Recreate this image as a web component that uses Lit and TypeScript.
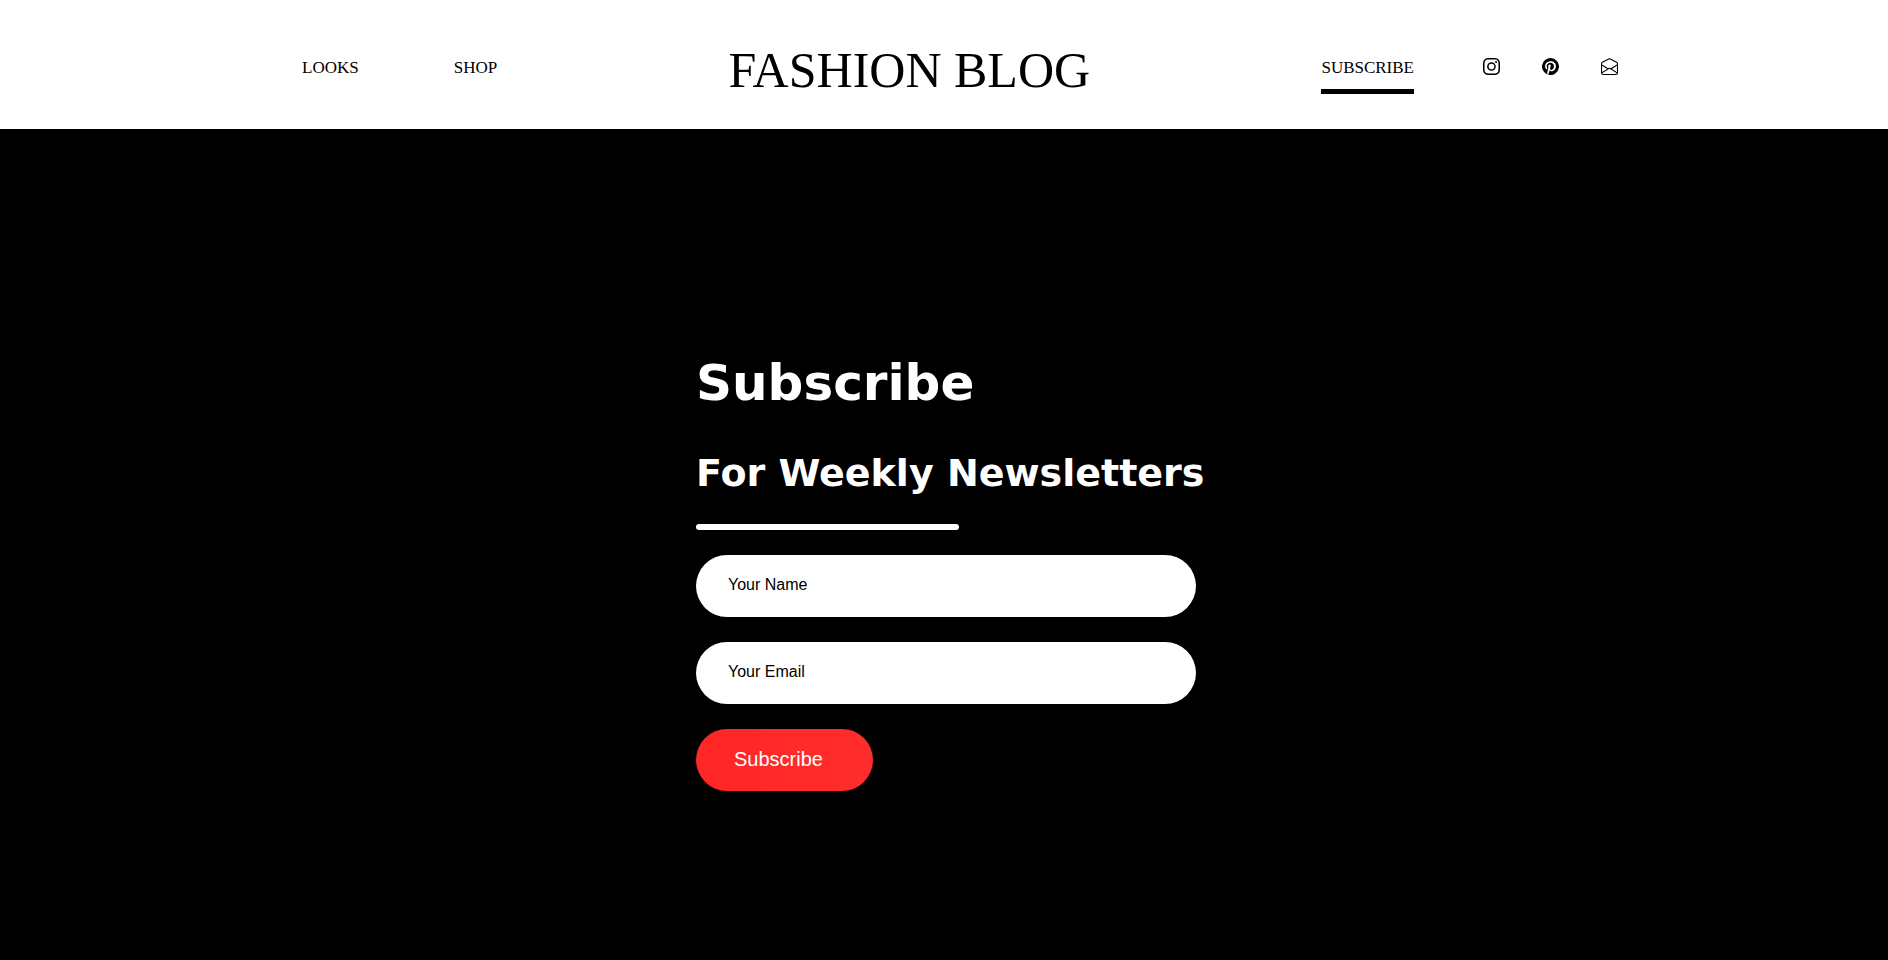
import { LitElement, html, css, svg } from "lit";
import { customElement } from "lit/decorators.js";

const instagram = svg`<path d="M8 0C5.829 0 5.556.01 4.703.048 3.85.088 3.269.222 2.76.42a3.9 3.9 0 0 0-1.417.923A3.9 3.9 0 0 0 .42 2.76C.222 3.268.087 3.85.048 4.7.01 5.555 0 5.827 0 8.001c0 2.172.01 2.444.048 3.297.04.852.174 1.433.372 1.942.205.526.478.972.923 1.417.444.445.89.719 1.416.923.51.198 1.09.333 1.942.372C5.555 15.99 5.827 16 8 16s2.444-.01 3.298-.048c.851-.04 1.434-.174 1.943-.372a3.9 3.9 0 0 0 1.416-.923c.445-.445.718-.891.923-1.417.197-.509.332-1.09.372-1.942C15.99 10.445 16 10.173 16 8s-.01-2.445-.048-3.299c-.04-.851-.175-1.433-.372-1.941a3.9 3.9 0 0 0-.923-1.417A3.9 3.9 0 0 0 13.24.42c-.51-.198-1.092-.333-1.943-.372C10.443.01 10.172 0 7.998 0zm-.717 1.442h.718c2.136 0 2.389.007 3.232.046.78.035 1.204.166 1.486.275.373.145.64.319.92.599s.453.546.598.92c.11.281.24.705.275 1.485.039.843.047 1.096.047 3.231s-.008 2.389-.047 3.232c-.035.78-.166 1.203-.275 1.485a2.5 2.5 0 0 1-.599.919c-.28.28-.546.453-.92.598-.28.11-.704.24-1.485.276-.843.038-1.096.047-3.232.047s-2.39-.009-3.233-.047c-.78-.036-1.203-.166-1.485-.276a2.5 2.5 0 0 1-.92-.598 2.5 2.5 0 0 1-.6-.92c-.109-.281-.24-.705-.275-1.485-.038-.843-.046-1.096-.046-3.233s.008-2.388.046-3.231c.036-.78.166-1.204.276-1.486.145-.373.319-.64.599-.92s.546-.453.92-.598c.282-.11.705-.24 1.485-.276.738-.034 1.024-.044 2.515-.045zm4.988 1.328a.96.96 0 1 0 0 1.92.96.96 0 0 0 0-1.92m-4.27 1.122a4.109 4.109 0 1 0 0 8.217 4.109 4.109 0 0 0 0-8.217m0 1.441a2.667 2.667 0 1 1 0 5.334 2.667 2.667 0 0 1 0-5.334"/>`;

const pinterest = svg`<path d="M8 0a8 8 0 0 0-2.915 15.452c-.07-.633-.134-1.606.027-2.297.146-.625.938-3.977.938-3.977s-.239-.479-.239-1.187c0-1.113.645-1.943 1.448-1.943.682 0 1.012.512 1.012 1.127 0 .686-.437 1.712-.663 2.663-.188.796.4 1.446 1.185 1.446 1.422 0 2.515-1.5 2.515-3.664 0-1.915-1.377-3.254-3.342-3.254-2.276 0-3.612 1.707-3.612 3.471 0 .688.265 1.425.595 1.826a.24.24 0 0 1 .056.23c-.061.252-.196.796-.222.907-.035.146-.116.177-.268.107-1-.465-1.624-1.926-1.624-3.1 0-2.523 1.834-4.84 5.286-4.84 2.775 0 4.932 1.977 4.932 4.62 0 2.757-1.739 4.976-4.151 4.976-.811 0-1.573-.421-1.834-.919l-.498 1.902c-.181.695-.669 1.566-.995 2.097A8 8 0 1 0 8 0"/>`;

const envelope = svg`<path d="M8.47 1.318a1 1 0 0 0-.94 0l-6 3.2A1 1 0 0 0 1 5.4v.817l5.75 3.45L8 8.917l1.25.75L15 6.217V5.4a1 1 0 0 0-.53-.882zM15 7.383l-4.778 2.867L15 13.117zm-.035 6.88L8 10.082l-6.965 4.18A1 1 0 0 0 2 15h12a1 1 0 0 0 .965-.738ZM1 13.116l4.778-2.867L1 7.383zM7.059.435a2 2 0 0 1 1.882 0l6 3.2A2 2 0 0 1 16 5.4V14a2 2 0 0 1-2 2H2a2 2 0 0 1-2-2V5.4a2 2 0 0 1 1.059-1.765z"/>`;

@customElement("site-header")
class SiteHeader extends LitElement {
  static styles = css`
    :host {
      display: block;
      background: #fff;
      color: #000;
      font-family: "Liberation Serif", "Times New Roman", serif;
    }
    .bar {
      display: flex;
      justify-content: space-between;
      align-items: flex-start;
      padding: 42px 14.3% 30px 16%;
    }
    .group {
      display: flex;
      align-items: flex-start;
      padding-top: 16px;
    }
    .pages {
      gap: 95px;
    }
    .actions {
      gap: 69px;
    }
    .social {
      display: flex;
      gap: 42px;
    }
    .link {
      color: inherit;
      font-size: 17px;
      line-height: 20px;
      text-decoration: none;
    }
    .active {
      padding-bottom: 11px;
      border-bottom: 5px solid #000;
    }
    .icon {
      display: block;
      width: 17px;
      height: 17px;
      fill: #000;
    }
    .title {
      margin: 0;
      font-size: 50px;
      line-height: 57px;
      font-weight: 400;
      white-space: nowrap;
    }
  `;

  private social(name: string, shape: unknown) {
    return html`<a href="#" aria-label=${name}>
      <svg class="icon" viewBox="0 0 16 16" aria-hidden="true">${shape}</svg>
    </a>`;
  }

  render() {
    return html`<header class="bar">
      <nav class="group pages">
        <a class="link" href="#">LOOKS</a>
        <a class="link" href="#">SHOP</a>
      </nav>
      <h1 class="title">FASHION BLOG</h1>
      <nav class="group actions">
        <a class="link active" href="#" aria-current="page">SUBSCRIBE</a>
        <div class="social">
          ${this.social("Instagram", instagram)}
          ${this.social("Pinterest", pinterest)}
          ${this.social("Email", envelope)}
        </div>
      </nav>
    </header>`;
  }
}

@customElement("newsletter-form")
class NewsletterForm extends LitElement {
  static styles = css`
    :host {
      display: block;
      width: 500px;
      max-width: 100%;
      color: #fff;
    }
    .heading,
    .subheading {
      margin: 0;
      font-family: "DejaVu Sans", Verdana, sans-serif;
      font-weight: 700;
      white-space: nowrap;
    }
    .heading {
      font-size: 50px;
      line-height: 58px;
    }
    .subheading {
      margin-top: 39px;
      font-size: 38px;
      line-height: 44px;
    }
    .rule {
      width: 263px;
      height: 6px;
      margin: 29px 0 25px;
      border: 0;
      border-radius: 3px;
      background: #fff;
    }
    .form {
      display: flex;
      flex-direction: column;
      align-items: flex-start;
      gap: 25px;
    }
    .field,
    .submit {
      box-sizing: border-box;
      border: 0;
      border-radius: 31px;
      font-family: "Liberation Sans", Arial, sans-serif;
    }
    .field {
      width: 100%;
      height: 62px;
      padding: 0 32px 2px;
      background: #fff;
      color: #000;
      font-size: 16px;
    }
    .field::placeholder {
      color: #000;
      opacity: 1;
    }
    .submit {
      height: 62px;
      padding: 0 50px 2px 38px;
      background: linear-gradient(90deg, #ff2626, #ff2d2d);
      color: #fff;
      font-size: 20px;
    }
  `;

  render() {
    return html`<h2 class="heading">Subscribe</h2>
      <h3 class="subheading">For Weekly Newsletters</h3>
      <hr class="rule" />
      <form class="form" @submit=${(e: Event) => e.preventDefault()}>
        <input class="field" type="text" name="name" placeholder="Your Name" aria-label="Your Name" />
        <input class="field" type="email" name="email" placeholder="Your Email" aria-label="Your Email" />
        <button class="submit" type="submit">Subscribe</button>
      </form>`;
  }
}

@customElement("app-root")
class AppRoot extends LitElement {
  static styles = css`
    :host {
      display: flex;
      flex-direction: column;
      min-height: 100vh;
      background: #000;
    }
    .main {
      display: flex;
      justify-content: center;
      padding: 225px 0 100px 4px;
    }
  `;

  render() {
    return html`<site-header></site-header>
      <main class="main"><newsletter-form></newsletter-form></main>`;
  }
}
